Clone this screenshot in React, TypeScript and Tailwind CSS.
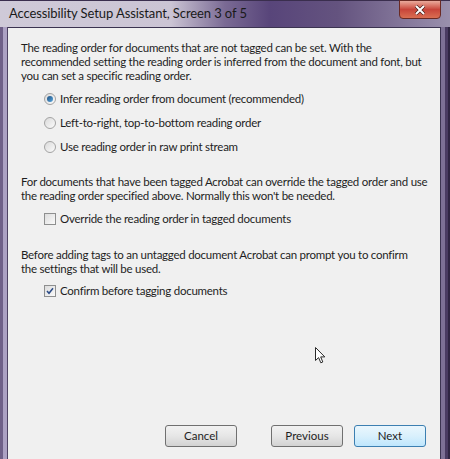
import React from 'react';

const font = { fontFamily: 'Lato, "Open Sans", sans-serif' };

const Radio: React.FC<{ checked?: boolean; label: string }> = ({ checked, label }) => (
  <div className="flex items-center gap-[4px] h-[14px]">
    <span className="w-[12px] h-[12px] rounded-full border border-[#a3a3a3] bg-gradient-to-br from-[#dadada] to-[#fbfbfb] flex items-center justify-center">
      {checked && <span className="w-[6px] h-[6px] rounded-full bg-gradient-to-br from-[#1d4f80] to-[#5aa8e0]" />}
    </span>
    <span>{label}</span>
  </div>
);

const Check: React.FC<{ checked?: boolean; label: string }> = ({ checked, label }) => (
  <div className="flex items-center gap-[4px] h-[14px]">
    <span className="w-[12px] h-[12px] border border-[#8e8f8f] bg-gradient-to-br from-[#dcdcdc] to-[#fafafa] flex items-center justify-center">
      {checked && (
        <svg width="8" height="8" viewBox="0 0 8 8">
          <path d="M1 4 L3 6.3 L7 1.3" fill="none" stroke="#2a4a86" strokeWidth="1.5" />
        </svg>
      )}
    </span>
    <span>{label}</span>
  </div>
);

const Button: React.FC<{ label: string; primary?: boolean }> = ({ label, primary }) => (
  <div
    className={`w-[72px] h-[22px] rounded-[3px] border flex items-center justify-center text-[11.5px] ${
      primary
        ? 'border-[#3c7fb1] bg-gradient-to-b from-[#eaf6fd] via-[#d9f0fc] to-[#bee6fd]'
        : 'border-[#707070] bg-gradient-to-b from-[#f2f2f2] via-[#e6e6e6] to-[#d2d2d2]'
    }`}
  >
    {label}
  </div>
);

export default function App() {
  return (
    <div className="relative w-[450px] h-[459px] overflow-hidden bg-[#4d3d66] flex flex-col" style={font}>
      {/* title bar */}
      <div className="h-[27px] shrink-0 flex items-start justify-between pl-[9px] pr-[9px] bg-[linear-gradient(90deg,#cfcad8_0%,#cbc4d4_38%,#7a6a94_50%,#58457a_60%,#64537f_75%,#9a90ad_100%)] border-t border-[#3a2e4e]">
        <span className="text-[13px] text-[#1a1a1a] mt-[3px] whitespace-nowrap tracking-[-0.1px]">
          Accessibility Setup Assistant, Screen 3 of 5
        </span>
        <div className="w-[42px] h-[19px] -mt-px rounded-b-[4px] border border-[#6a2a24] bg-gradient-to-b from-[#e9a99c] via-[#c8443a] to-[#d96e52] flex items-center justify-center">
          <svg width="12" height="10" viewBox="0 0 12 10">
            <path d="M2 1 L10 9 M10 1 L2 9" stroke="#3a1a16" strokeWidth="3.2" />
            <path d="M2 1 L10 9 M10 1 L2 9" stroke="#ffffff" strokeWidth="2" />
          </svg>
        </div>
      </div>

      {/* frame + client area */}
      <div className="flex flex-1">
        <div className="w-[8px] shrink-0 flex">
          <div className="w-[3px] bg-[#6f6088]" />
          <div className="w-[4px] bg-[#aca1c3]" />
          <div className="w-[1px] bg-[#4e4263]" />
        </div>
        <div className="flex-1 border-t border-r border-[#3b3350] bg-[#f0f0f0] text-[11.5px] tracking-[-0.25px] text-[#1e1e1e] leading-[14px] flex flex-col whitespace-nowrap">
          <div className="pl-[13px] pt-[13px] flex flex-col">
            <p>
              The reading order for documents that are not tagged can be set. With the
              <br />
              recommended setting the reading order is inferred from the document and font, but
              <br />
              you can set a specific reading order.
            </p>
            <div className="pl-[23px] mt-[9px] flex flex-col gap-[10px]">
              <Radio checked label="Infer reading order from document (recommended)" />
              <Radio label="Left-to-right, top-to-bottom reading order" />
              <Radio label="Use reading order in raw print stream" />
            </div>
            <p className="mt-[21px]">
              For documents that have been tagged Acrobat can override the tagged order and use
              <br />
              the reading order specified above. Normally this won't be needed.
            </p>
            <div className="pl-[23px] mt-[9px]">
              <Check label="Override the reading order in tagged documents" />
            </div>
            <p className="mt-[22px]">
              Before adding tags to an untagged document Acrobat can prompt you to confirm
              <br />
              the settings that will be used.
            </p>
            <div className="pl-[23px] mt-[8px]">
              <Check checked label="Confirm before tagging documents" />
            </div>
          </div>
          <div className="flex-1" />
          <div className="flex justify-end pr-[14px] pb-[12px] gap-[11px] tracking-normal">
            <div className="mr-[23px]">
              <Button label="Cancel" />
            </div>
            <Button label="Previous" />
            <Button label="Next" primary />
          </div>
        </div>
        <div className="w-[9px] shrink-0 flex">
          <div className="w-[4px] bg-[#7d7095]" />
          <div className="w-[3px] bg-[#4a3b62]" />
          <div className="w-[2px] bg-[#2f2542]" />
        </div>
      </div>

      {/* mouse pointer */}
      <svg className="absolute left-[315px] top-[347px]" width="12" height="17" viewBox="0 0 12 17">
        <path d="M0.5 0.5 L0.5 13.5 L3.6 10.6 L5.8 15.8 L7.8 15 L5.7 9.9 L9.8 9.9 Z" fill="#ffffff" stroke="#2a2a2a" strokeWidth="1" />
      </svg>
    </div>
  );
}
